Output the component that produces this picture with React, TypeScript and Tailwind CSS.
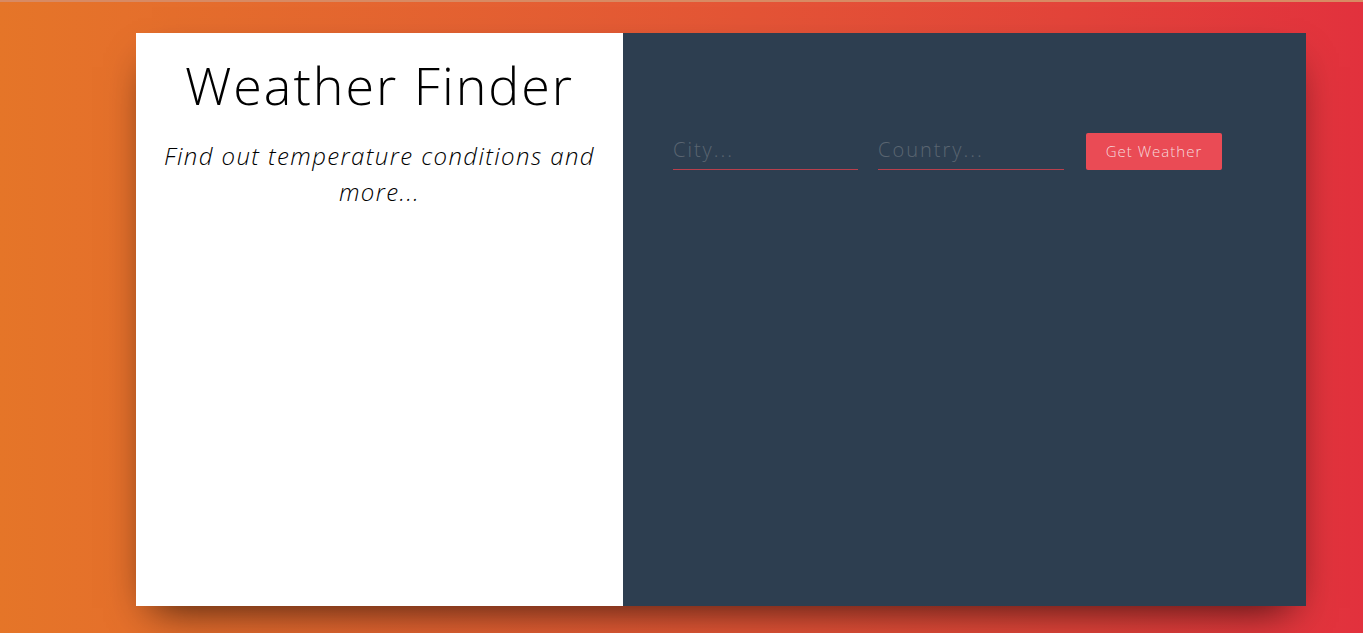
import { useState } from 'react';

export default function App() {
  const [city, setCity] = useState('');
  const [country, setCountry] = useState('');

  return (
    <div className="h-[633px] w-full overflow-hidden border-t-2 border-[#d88a63] bg-gradient-to-r from-[#e57528] to-[#e2313d] font-['Open_Sans',sans-serif]">
      <div className="ml-[136px] mt-[31px] flex h-[573px] w-[1170px] shadow-[0_18px_40px_-16px_rgba(0,0,0,0.75)]">
        {/* title panel */}
        <div className="flex w-[487px] flex-col items-center bg-white pt-[17px] text-black">
          <h1 className="text-[52px] font-light leading-[70px] tracking-[2px]">Weather Finder</h1>
          <p className="mt-[18px] px-4 text-center text-[24px] font-light italic leading-[36px] tracking-[1.4px]">
            Find out temperature conditions and more...
          </p>
        </div>

        {/* form panel */}
        <div className="flex-1 bg-[#2d3e50] pl-[50px] pt-[100px]">
          <form className="flex items-start" onSubmit={(e) => e.preventDefault()}>
            <div className="w-[185px] border-b border-[#b83f4c]">
              <input
                value={city}
                onChange={(e) => setCity(e.target.value)}
                placeholder="City..."
                className="h-[36px] w-full bg-transparent pb-[4px] text-[20px] font-light tracking-[2px] text-white outline-none placeholder:text-[#5a6571]"
              />
            </div>
            <div className="ml-[20px] w-[186px] border-b border-[#b83f4c]">
              <input
                value={country}
                onChange={(e) => setCountry(e.target.value)}
                placeholder="Country..."
                className="h-[36px] w-full bg-transparent pb-[4px] text-[20px] font-light tracking-[2px] text-white outline-none placeholder:text-[#5a6571]"
              />
            </div>
            <button className="ml-[22px] h-[37px] w-[136px] rounded-[2px] bg-[#ea4b55] text-[15px] font-light tracking-[1px] text-[#f6d9db]">
              Get Weather
            </button>
          </form>
        </div>
      </div>
    </div>
  );
}
